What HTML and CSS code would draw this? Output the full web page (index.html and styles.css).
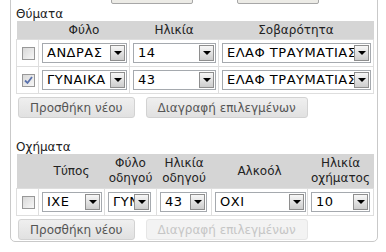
FILE: index.html
```html
<!DOCTYPE html>
<html lang="el">
<head>
    <meta charset="UTF-8">
    <title>Ατύχημα</title>
    <link rel="stylesheet" href="styles.css">
</head>
<body>
    <div class="panel">
        <div class="top-actions">
            <button class="btn-old"></button>
            <button class="btn-old"></button>
        </div>

        <div class="section-title">Θύματα</div>
        <table class="grid victims">
            <colgroup>
                <col class="c-check">
                <col class="c-sex">
                <col class="c-age">
                <col class="c-sev">
            </colgroup>
            <thead>
                <tr><th></th><th>Φύλο</th><th>Ηλικία</th><th>Σοβαρότητα</th></tr>
            </thead>
            <tbody>
                <tr>
                    <td class="check-cell"><span class="check"></span></td>
                    <td><div class="select"><span class="value">ΑΝΔΡΑΣ</span><span class="arrow"></span></div></td>
                    <td><div class="select"><span class="value">14</span><span class="arrow"></span></div></td>
                    <td><div class="select"><span class="value">ΕΛΑΦ ΤΡΑΥΜΑΤΙΑΣ</span><span class="arrow"></span></div></td>
                </tr>
                <tr>
                    <td class="check-cell">
                        <span class="check">
                            <svg width="11" height="11" viewBox="0 0 11 11"><polyline points="2,5.5 4.5,8 9,2" fill="none" stroke="#5a72ad" stroke-width="1.8"/></svg>
                        </span>
                    </td>
                    <td><div class="select"><span class="value">ΓΥΝΑΙΚΑ</span><span class="arrow"></span></div></td>
                    <td><div class="select"><span class="value">43</span><span class="arrow"></span></div></td>
                    <td><div class="select"><span class="value">ΕΛΑΦ ΤΡΑΥΜΑΤΙΑΣ</span><span class="arrow"></span></div></td>
                </tr>
            </tbody>
        </table>
        <div class="actions">
            <button class="btn">Προσθήκη νέου</button>
            <button class="btn">Διαγραφή επιλεγμένων</button>
        </div>

        <div class="section-title">Οχήματα</div>
        <table class="grid vehicles">
            <colgroup>
                <col class="c-check">
                <col class="c-type">
                <col class="c-dsex">
                <col class="c-dage">
                <col class="c-alc">
                <col class="c-vage">
            </colgroup>
            <thead>
                <tr>
                    <th></th>
                    <th>Τύπος</th>
                    <th>Φύλο<br>οδηγού</th>
                    <th>Ηλικία<br>οδηγού</th>
                    <th>Αλκοόλ</th>
                    <th>Ηλικία<br>οχήματος</th>
                </tr>
            </thead>
            <tbody>
                <tr>
                    <td class="check-cell"><span class="check"></span></td>
                    <td><div class="select"><span class="value">ΙΧΕ</span><span class="arrow"></span></div></td>
                    <td><div class="select sel-dsex"><span class="value">ΓΥΝΑΙΚΑ</span><span class="arrow"></span></div></td>
                    <td><div class="select sel-dage"><span class="value">43</span><span class="arrow"></span></div></td>
                    <td><div class="select sel-alc"><span class="value">ΟΧΙ</span><span class="arrow"></span></div></td>
                    <td><div class="select sel-vage"><span class="value">10</span><span class="arrow"></span></div></td>
                </tr>
            </tbody>
        </table>
        <div class="actions">
            <button class="btn">Προσθήκη νέου</button>
            <button class="btn" disabled>Διαγραφή επιλεγμένων</button>
        </div>
    </div>
</body>
</html>
```

FILE: styles.css
```css
body {
    margin: 0;
    font-family: "DejaVu Sans", Verdana, sans-serif;
    font-size: 12px;
    color: #222;
    background-color: #fff;
}

.panel {
    width: 368px;
    box-sizing: border-box;
    margin: -19px 0 0 10px;
    padding: 0 4px 1px 5px;
    border: 1px solid #c9c9c9;
    border-radius: 0 0 5px 5px;
}

.top-actions {
    display: flex;
    gap: 44px;
    padding-left: 95px;
    height: 22px;
}

.btn-old {
    width: 82px;
    height: 22px;
    background-color: #ecebe6;
    border: 1px solid #a7a7a7;
    border-radius: 2px;
}

.section-title {
    margin-top: 3px;
    line-height: 14px;
}

.actions + .section-title {
    margin-top: 22px;
}

/* tables */
.grid {
    width: 357px;
    border-collapse: collapse;
    table-layout: fixed;
}

.grid th {
    background-color: #d5d5d5;
    font-weight: normal;
    padding: 2px 1px;
    line-height: 14px;
    text-align: center;
}

.vehicles th {
    line-height: 15px;
}

.grid td {
    border: 1px solid #dedede;
    padding: 3px 2px 3px 3px;
}

.c-check { width: 22px; }
.c-sex { width: 91px; }
.c-age { width: 89px; }
.c-sev { width: 155px; }

.c-type { width: 66px; }
.c-dsex { width: 52px; }
.c-dage { width: 55px; }
.c-alc { width: 96px; }
.c-vage { width: 66px; }

.check-cell {
    text-align: center;
}

.check {
    display: inline-flex;
    align-items: center;
    justify-content: center;
    width: 13px;
    height: 13px;
    box-sizing: border-box;
    vertical-align: middle;
    border: 1px solid #989898;
    background: linear-gradient(135deg, #d8d8d8, #f7f7f7);
}

/* fake dropdowns */
.select {
    display: flex;
    align-items: center;
    height: 20px;
    box-sizing: border-box;
    border: 1px solid #a5a9ae;
    background-color: #fff;
    font-size: 13px;
    line-height: 16px;
    color: #000;
}

.select .value {
    flex: 1;
    min-width: 0;
    overflow: hidden;
    white-space: nowrap;
    padding-left: 4px;
    letter-spacing: 0.5px;
}

.select .arrow {
    flex: none;
    display: flex;
    align-items: center;
    justify-content: center;
    width: 15px;
    height: 16px;
    margin-right: 1px;
    box-sizing: border-box;
    border: 1px solid #8e8e8e;
    background: linear-gradient(#f7f7f7, #cdcdcd);
}

.select .arrow::after {
    content: "";
    border-left: 4px solid transparent;
    border-right: 4px solid transparent;
    border-top: 4px solid #000;
}

.sel-dsex { width: 43px; }
.sel-dage { width: 47px; }
.sel-alc { width: 91px; }
.sel-vage { width: 59px; }

/* buttons */
.actions {
    display: flex;
    gap: 11px;
    padding-left: 2px;
    margin-top: 3px;
}

.btn {
    height: 21px;
    padding: 0 11px;
    font-family: "DejaVu Sans", Verdana, sans-serif;
    font-size: 12px;
    color: #555;
    background: linear-gradient(#efefef, #e1e1e1);
    border: 1px solid #d2d2d2;
    border-radius: 3px;
}

.btn:disabled {
    color: #c6c6c6;
    background: #f3f3f3;
    border-color: #e6e6e6;
}
```
